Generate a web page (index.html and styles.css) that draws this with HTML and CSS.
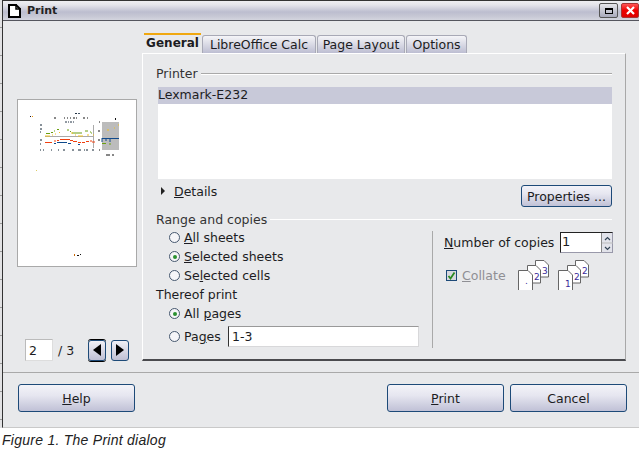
FILE: index.html
```html
<!DOCTYPE html>
<html lang="en">
<head>
<meta charset="utf-8">
<title>Print</title>
<link rel="stylesheet" href="styles.css">
</head>
<body>
<div class="frame">
<div class="edge"></div>
<div class="window">
  <div class="titlebar">
    <svg class="app-icon" width="13" height="14" viewBox="0 0 13 14"><path d="M1 1H8L12 5V13H1Z" fill="#fff" stroke="#000" stroke-width="2"/><path d="M8 0V5H13" fill="none" stroke="#000" stroke-width="1.5"/></svg>
    <span class="title">Print</span>
    <span class="spacer"></span>
    <span class="win-btn"><span class="max-glyph"></span></span>
    <span class="win-btn close"><svg width="9" height="9" viewBox="0 0 9 9"><path d="M1 1L8 8M8 1L1 8" stroke="#fff" stroke-width="2.2"/></svg></span>
  </div>
  <div class="main">
    <div class="side">
      <div class="preview">
        <svg width="118" height="166" viewBox="0 0 118 166">
          <rect x="57" y="13" width="2" height="1" fill="#234"/><rect x="60" y="13" width="2" height="1" fill="#456"/>
          <rect x="12" y="16" width="1" height="1" fill="#113"/><rect x="14" y="16" width="1" height="1" fill="#e90"/>
          <path d="M36 18h2M46 18h1M49 18h1M52 18h1M55 18h2M58 18h1M65 18h2M69 18h1" stroke="#111" fill="none"/>
          <path d="M47 22h2M50 22h1M52 22h2M55 22h1" stroke="#234" fill="none"/>
          <path d="M22 25h2M22 29h2M22 32h1M22 40h2M22 44h1M22 50h1M25 50h1M33 50h1M40 50h1M45 50h2M54 50h2M60 50h3M66 50h1M68 50h2M74 50h2" stroke="#123" fill="none"/>
          <path d="M27 36.500H75" stroke="#aaa"/><path d="M75.500 25V48" stroke="#aaa"/>
          <path d="M28 33.500h4M33 32.500h2M36 31h1M39 29.500h2M49 30h2M52 31.500h1M54 33h10M67 31h3M72 32h1M73 33h1" stroke="#6a9f10" fill="none"/>
          <path d="M27 36h5M34 35h1M37 34h1M41 32.500h1M53 33h2M57 35h1M60 36h5M69 35h2M75 35h1" stroke="#f0c020" fill="none"/>
          <path d="M27 42.500h7M36 41h2M39 40.500h2M42 39.500h10M52 40.500h3M55 41.500h4M60 42.500h3M64 42.500h3M68 41.500h3M72 41h2M74 42h3" stroke="#f04010" fill="none"/>
          <path d="M36 43.500h2M39 42.500h10M50 43.500h3M60 44.500h2" stroke="#104a8c" fill="none"/>
          <rect x="84" y="22" width="17" height="28" fill="#bcbcbc"/>
          <path d="M84 38.500H101M84 38V42M88 38V41M92 38V42" stroke="#104a8c" fill="none"/>
          <path d="M84 43.500h4M92 43V45" stroke="#6a9f10" fill="none"/>
          <path d="M89 30h2M96 28h1M100 25h1" stroke="#f0c020" fill="none"/>
          <path d="M81 22h1M80 31h2M80 40h2M81 50h1M88 55h4M94 55h2" stroke="#111" fill="none"/>
          <rect x="97" y="18" width="1" height="2" fill="#111"/>
          <rect x="18" y="70" width="1" height="1" fill="#ddcc66"/>
          <rect x="56" y="154" width="1" height="2" fill="#c60"/><rect x="59" y="155" width="2" height="1" fill="#111"/><rect x="62" y="154" width="1" height="1" fill="#111"/>
        </svg>
      </div>
      <div class="pager">
        <span class="field page-field">2</span>
        <span class="page-total">/ 3</span>
        <span class="pager-btns">
          <span class="nav-btn focused"><span class="tri-left"></span></span>
          <span class="nav-btn"><span class="tri-right"></span></span>
        </span>
      </div>
    </div>
    <div class="content">
      <div class="tabs">
        <span class="tab active">General</span>
        <span class="tab calc">LibreOffice Calc</span>
        <span class="tab layout">Page Layout</span>
        <span class="tab options">Options</span>
      </div>
      <div class="panel">
        <div class="group-head"><span>Printer</span><i class="rule gray"></i></div>
        <div class="list"><div class="list-row">Lexmark-E232</div></div>
        <div class="details-row">
          <span class="details"><span class="tri-small"></span><span><u>D</u>etails</span></span>
          <span class="btn props">Properties ...</span>
        </div>
        <div class="group-head range"><span>Range and copies</span><i class="rule white"></i></div>
        <div class="columns">
          <div class="col-left">
            <label class="row"><i class="radio"></i><span><u>A</u>ll sheets</span></label>
            <label class="row"><i class="radio on"></i><span><u>S</u>elected sheets</span></label>
            <label class="row"><i class="radio"></i><span>Se<u>l</u>ected cells</span></label>
            <div class="row heading">Thereof print</div>
            <label class="row"><i class="radio on"></i><span>All <u>p</u>ages</span></label>
            <label class="row pages"><i class="radio"></i><span>Pa<u>g</u>es</span><span class="field pages-field">1-3</span></label>
          </div>
          <div class="col-right">
            <div class="copies">
              <span class="copies-label"><u>N</u>umber of copies</span>
              <span class="spin"><span class="spin-val">1</span><span class="spin-arrows"><svg width="11" height="20" viewBox="0 0 11 20"><path d="M3 7L5.500 4.500L8 7M3 14L5.500 16.500L8 14" fill="none" stroke="#345" stroke-width="1.200"/><path d="M0 10H11" stroke="#bbb"/></svg></span></span>
            </div>
            <div class="collate">
              <label class="check-label"><i class="check"><svg width="9" height="9" viewBox="0 0 9 9"><path d="M1.500 5L3.500 7.500L7.500 1.500" fill="none" stroke="#2a8a20" stroke-width="1.800"/></svg></i><span><u>C</u>ollate</span></label>
              <svg class="stack" width="32" height="30" viewBox="0 0 32 30"><g fill="#fff" stroke="#666"><path d="M17.500 .5H26L30.500 5V17H17.500Z"/><path d="M9.500 5.500H18L22.500 10V23H9.500Z"/><path d="M.5 30V10.500H10L14.500 15V30" /></g><g class="nums"><text x="24" y="14">3</text><text x="16" y="20">2</text><text x="7" y="24">.</text></g></svg>
              <svg class="stack b" width="32" height="30" viewBox="0 0 32 30"><g fill="#fff" stroke="#666"><path d="M17.500 .5H26L30.500 5V17H17.500Z"/><path d="M9.500 5.500H18L22.500 10V23H9.500Z"/><path d="M.5 30V10.500H10L14.500 15V30" /></g><g class="nums"><text x="24" y="14">2</text><text x="16" y="20">2</text><text x="7" y="27">1</text></g></svg>
            </div>
          </div>
        </div>
      </div>
    </div>
  </div>
  <div class="footer">
    <span class="btn wide"><span><u>H</u>elp</span></span>
    <span class="spacer"></span>
    <span class="btn wide"><span><u>P</u>rint</span></span>
    <span class="btn wide">Cancel</span>
  </div>
</div>
</div>
<p class="caption">Figure 1. The Print dialog</p>
</body>
</html>
```
FILE: styles.css
```css
* { box-sizing: border-box; }
html, body { margin: 0; padding: 0; background: #fff; }
body { font-family: "DejaVu Sans", sans-serif; font-size: 12.5px; color: #1c1c22; width: 639px; height: 460px; overflow: hidden; }
u { text-decoration: underline; text-underline-offset: 1px; }
i { display: block; font-style: normal; }

.frame { display: flex; height: 428px; }
.edge { width: 2px; flex: none; background: repeating-linear-gradient(#e2e2e4 0 27px, #9a9a9a 27px 28px); }
.window { width: 637px; height: 428px; background: #e8e9eb; border-top: 1px solid #333; border-bottom: 1px solid #c9c9c9; border-left: 1px solid #333; display: flex; flex-direction: column; }

.titlebar { height: 20px; flex: none; display: flex; align-items: center; padding: 0 0 0 5px; background: linear-gradient(#eeeef1 0, #e4e4ea 4px, #bcbdcf 11px, #c6c7d4 15px, #d4d5de 19px); border-bottom: 1px solid #55565e; }
.app-icon { flex: none; }
.title { font-weight: 700; margin-left: 6px; font-size: 11px; color: #222; }
.spacer { flex: 1; }
.win-btn { width: 19px; height: 15px; border: 1px solid #555; border-radius: 2px; background: linear-gradient(#e6e6ea, #a8a9bb); display: flex; align-items: center; justify-content: center; margin-right: 3px; }
.win-btn.close { margin-right: 0; width: 18px; background: linear-gradient(#f55, #e00 50%, #d00); border-color: #a33; }
.max-glyph { width: 8px; height: 6px; border: 1px solid #000; border-top-width: 2px; }

.main { flex: none; height: 340px; display: flex; }
.side { width: 139px; flex: none; padding: 78px 0 0 14px; display: flex; flex-direction: column; }
.preview { width: 120px; height: 169px; background: #fff; border: 1px solid #a9a9a9; }
.preview svg { display: block; }
.pager { margin: 72px 0 0 8px; display: flex; align-items: center; height: 22px; }
.field { background: #fff; border: 1px solid #d8d8da; border-top-color: #999; border-left-color: #333; display: block; }
.page-field { width: 28px; height: 22px; padding: 3px 0 0 3px; border-color: #ddd; border-left-color: #bbb; border-top-color: #bbb; }
.page-total { margin-left: 5px; width: 30px; }
.pager-btns { display: flex; gap: 5px; }
.nav-btn { width: 18px; height: 21px; border: 1px solid #1d4a78; border-radius: 3px; background: linear-gradient(#f0f0f6, #bfc0d4); display: flex; align-items: center; justify-content: center; }
.nav-btn.focused { box-shadow: 0 -1px 0 #000, 0 1px 0 #000; }
.tri-left { border: 6px solid transparent; border-right: 8px solid #000; border-left: 0; }
.tri-right { border: 6px solid transparent; border-left: 8px solid #000; border-right: 0; }

.content { width: 484px; flex: none; padding-top: 12px; }
.tabs { display: flex; height: 20px; align-items: flex-end; margin-left: 2px; }
.tab { height: 18px; border: 1px solid #a8a9b6; border-bottom: 0; border-radius: 3px 3px 0 0; background: linear-gradient(#f5f5f8, #bdbed2); text-align: center; line-height: 17px; margin-right: 1px; white-space: nowrap; }
.tab.active { width: 57px; height: 20px; border: 0; border-top: 2px solid #f0a810; border-radius: 0; background: #e8e9eb; font-weight: 700; font-size: 12px; line-height: 17px; }
.tab.calc { width: 114px; }
.tab.layout { width: 88px; }
.tab.options { width: 61px; }
.panel { height: 308px; padding: 12px 13px 0 13px; border-top: 1px solid #fff; border-left: 1px solid #fff; border-right: 1px solid #a8a8a8; border-bottom: 2px solid #4a4a4e; }

.group-head { height: 14px; display: flex; align-items: center; gap: 3px; color: #333; }
.rule { flex: 1; height: 1px; }
.rule.gray { background: #a9a9a9; box-shadow: 0 1px 0 #fff; }
.rule.white { background: #fff; }
.list { margin: 7px 0 0 2px; height: 92px; background: #fff; }
.list-row { height: 17px; background: #c8c9d9; padding-left: 0; line-height: 16px; }
.details-row { display: flex; justify-content: space-between; align-items: center; height: 22px; margin-top: 6px; }
.details { display: flex; align-items: center; padding-left: 5px; margin-top: -10px; }
.tri-small { border: 4px solid transparent; border-left: 4px solid #222; border-right: 0; margin-right: 9px; }
.btn { display: flex; align-items: center; justify-content: center; border: 1px solid #1d4a78; border-radius: 3px; background: linear-gradient(#f3f3f8, #e6e6f0 40%, #c0c1d6); color: #1c1c22; }
.props { width: 91px; height: 22px; }
.group-head.range { margin-top: 5px; }
.columns { display: flex; }
.col-left { width: 276px; padding: 2px 13px 0 0; flex: none; }
.row { display: flex; align-items: center; height: 19px; padding-left: 13px; }
.row.heading { padding-left: 0; }
.row.pages { height: 21px; margin-top: 3px; }
.radio { width: 11px; height: 11px; flex: none; border-radius: 50%; border: 1px solid #46586f; background: #f5f5f8; margin-right: 4px; display: flex; align-items: center; justify-content: center; }
.radio.on::after { content: ""; width: 4px; height: 4px; border-radius: 50%; background: #2a9030; }
.pages-field { width: 191px; height: 21px; margin-left: auto; padding: 2px 0 0 3px; }
.col-right { margin-top: 5px; height: 117px; border-left: 1px solid #a9a9a9; padding-left: 11px; flex: 1; }
.copies { display: flex; align-items: center; margin-top: 1px; height: 20px; }
.copies-label { width: 116px; flex: none; white-space: nowrap; }
.spin { width: 53px; height: 21px; display: flex; background: #fff; border: 1px solid #222; border-right-color: #99a; border-bottom-color: #99a; }
.spin-val { flex: 1; padding-left: 1px; line-height: 18px; font-size: 13px; }
.spin-arrows { width: 11px; background: #e2e3ea; border-left: 1px solid #888; }
.spin-arrows svg { display: block; }
.collate { display: flex; align-items: center; margin-top: 8px; height: 30px; }
.check-label { display: flex; align-items: center; width: 72px; color: #8f8f94; margin-left: 2px; flex: none; }
.check { width: 11px; height: 11px; border: 1px solid #1d4a78; background: #d8d8de; margin-right: 5px; display: flex; align-items: center; justify-content: center; }
.stack { flex: none; }
.stack.b { margin-left: 8px; }
.nums { font-size: 9px; fill: #3a2a9a; font-family: "DejaVu Sans", sans-serif; }

.footer { flex: 1; margin: 11px 0 0 0; padding: 11px 12px 0 15px; border-top: 1px solid #a9a9a9; display: flex; gap: 6px; align-items: flex-start; }
.btn.wide { width: 117px; height: 28px; }
.caption { margin: 4px 0 0 2px; font-family: "Liberation Sans", sans-serif; font-style: italic; font-size: 14px; letter-spacing: 0.26px; color: #222; }
```
